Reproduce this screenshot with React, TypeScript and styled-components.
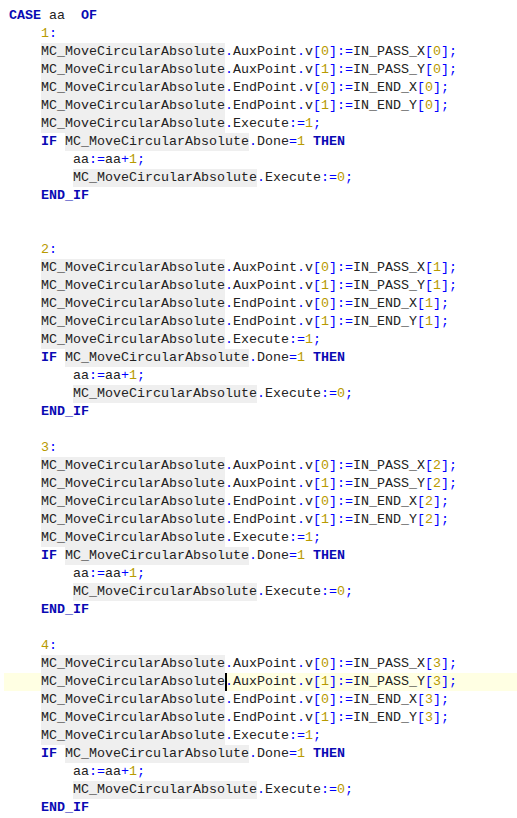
import React from "react";
import styled, { createGlobalStyle } from "styled-components";

const Global = createGlobalStyle`
  html, body { margin: 0; padding: 0; background: #ffffff; }
  body { font-family: "Liberation Mono", "Courier New", monospace; }
`;

const Editor = styled.div`
  display: flex;
  flex-direction: column;
  padding: 7px 0 0 4px;
  width: 517px;
  box-sizing: border-box;
  font-family: "Liberation Mono", "Courier New", monospace;
  font-size: 13.3333px;
  color: #222222;
`;

const Line = styled.div<{ $current?: boolean }>`
  height: 18px;
  line-height: 18px;
  padding-left: 5px;
  white-space: pre;
  background: ${(p) => (p.$current ? "#ffffe3" : "transparent")};
`;

const Keyword = styled.span`
  color: #0a0ab4;
  font-weight: bold;
`;

const Num = styled.span`
  color: #b89a00;
`;

const Punct = styled.span`
  color: #0000ff;
`;

const Ident = styled.span<{ $mark?: boolean }>`
  color: #222222;
  ${(p) =>
    p.$mark
      ? `display: inline-block; height: 18px; vertical-align: top; background: #efefef;`
      : ""}
`;

const Caret = styled.span`
  display: inline-block;
  width: 2px;
  height: 18px;
  margin-right: -2px;
  vertical-align: top;
  background: #000000;
`;

const KEYWORDS = new Set(["CASE", "OF", "IF", "THEN", "END_IF"]);
const MARK = "MC_MoveCircularAbsolute";

function block(n: number): string[] {
  return [
    `    ${n + 1}:`,
    `    ${MARK}.AuxPoint.v[0]:=IN_PASS_X[${n}];`,
    `    ${MARK}.AuxPoint.v[1]:=IN_PASS_Y[${n}];`,
    `    ${MARK}.EndPoint.v[0]:=IN_END_X[${n}];`,
    `    ${MARK}.EndPoint.v[1]:=IN_END_Y[${n}];`,
    `    ${MARK}.Execute:=1;`,
    `    IF ${MARK}.Done=1 THEN`,
    `        aa:=aa+1;`,
    `        ${MARK}.Execute:=0;`,
    `    END_IF`,
  ];
}

const LINES: string[] = [
  "CASE aa  OF",
  ...block(0),
  "",
  "",
  ...block(1),
  "",
  ...block(2),
  "",
  ...block(3),
];

const CURRENT_LINE = 37;
const CARET_COL = 4 + MARK.length;

type Tok = { kind: "kw" | "num" | "punct" | "id" | "ws"; text: string; start: number };

function tokenize(s: string): Tok[] {
  const out: Tok[] = [];
  const re = /(\s+)|([A-Za-z_][A-Za-z0-9_]*)|([0-9]+)|(.)/g;
  let m: RegExpExecArray | null;
  while ((m = re.exec(s))) {
    const start = m.index;
    if (m[1]) out.push({ kind: "ws", text: m[1], start });
    else if (m[2]) out.push({ kind: KEYWORDS.has(m[2]) ? "kw" : "id", text: m[2], start });
    else if (m[3]) out.push({ kind: "num", text: m[3], start });
    else out.push({ kind: "punct", text: m[4], start });
  }
  return out;
}

function renderLine(s: string, withCaret: boolean) {
  const toks = tokenize(s);
  const nodes: React.ReactNode[] = [];
  toks.forEach((t, i) => {
    switch (t.kind) {
      case "kw":
        nodes.push(<Keyword key={i}>{t.text}</Keyword>);
        break;
      case "num":
        nodes.push(<Num key={i}>{t.text}</Num>);
        break;
      case "punct":
        nodes.push(<Punct key={i}>{t.text}</Punct>);
        break;
      case "id":
        nodes.push(
          <Ident key={i} $mark={t.text === MARK}>
            {t.text}
          </Ident>
        );
        break;
      default:
        nodes.push(<React.Fragment key={i}>{t.text}</React.Fragment>);
    }
    if (withCaret && t.start + t.text.length === CARET_COL) {
      nodes.push(<Caret key={`c${i}`} />);
    }
  });
  return nodes;
}

export default function App() {
  return (
    <>
      <Global />
      <Editor>
        {LINES.map((l, i) => (
          <Line key={i} $current={i === CURRENT_LINE}>
            {l === "" ? " " : renderLine(l, i === CURRENT_LINE)}
          </Line>
        ))}
      </Editor>
    </>
  );
}
